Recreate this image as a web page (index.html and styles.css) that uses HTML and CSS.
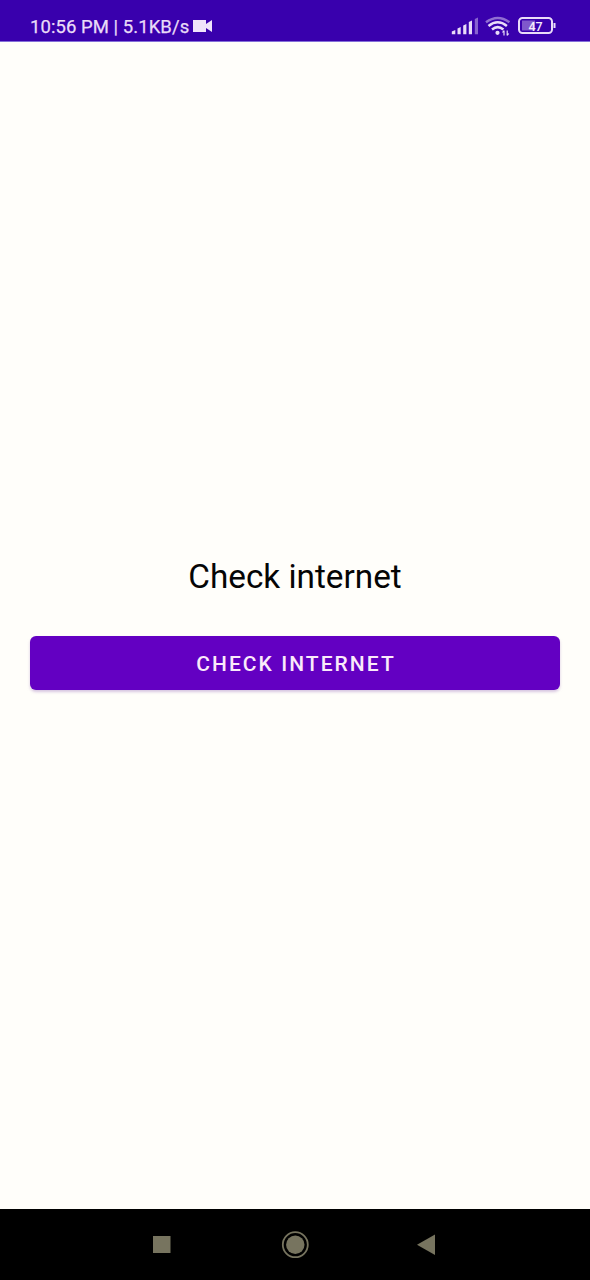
FILE: index.html
```html
<!DOCTYPE html>
<html lang="en">
<head>
<meta charset="utf-8">
<title>Check internet</title>
<link rel="stylesheet" href="styles.css">
</head>
<body>
<div class="screen">
  <header class="status">
    <span class="status-text">10:56 PM | 5.1KB/s</span>
    <svg class="camera" viewBox="0 0 21 14"><path d="M1 1h13v4l6-4v12l-6-4v4H1z"/></svg>
    <svg class="indicators" viewBox="0 0 108 22">
      <g fill="#e9dcf8">
        <path d="M.8 15.500L4.300 14v4.300H.8zM6.500 12.500L9.700 11v7.300H6.500zM12.200 9.500L15.400 8v10.300h-3.200zM17.800 6L21 4.500v13.800h-3.200z"/>
        <path d="M23.800 3L27 1.500v16.800h-3.200z" opacity=".45"/>
      </g>
      <g fill="none" stroke="#e9dcf8" stroke-width="2.500">
        <path d="M35 6.300q11.700-8.500 23.400 0" opacity=".5"/>
        <path d="M37.500 10q9.200-7.500 18.400 0M41 13.500q5.700-4.800 11.400 0"/>
        <circle cx="46.500" cy="16.800" r="1.100" stroke-width="2"/>
        <path d="M53 14.500v5M56.200 14.500v5M51.500 16.500l1.500-2M57.700 17.500l-1.500 2" stroke-width="1.200"/>
        <rect x="68" y="2" width="33" height="15" rx="3.500" stroke-width="2"/>
        <path d="M103.500 7v5" stroke-width="2"/>
      </g>
      <path d="M71 4.500h13v10H71z" fill="#e9dcf8" opacity=".4"/>
      <text x="84.500" y="14.500" class="battery-level">47</text>
    </svg>
  </header>
  <main class="content">
    <h1 class="title">Check internet</h1>
    <button class="button" type="button">CHECK INTERNET</button>
  </main>
  <nav class="navbar">
    <svg class="nav-icon" viewBox="0 0 28 28"><path d="M5 5h17.500v17H5z"/></svg>
    <svg class="nav-icon" viewBox="0 0 28 28"><circle cx="14.300" cy="13.700" r="9.200"/><circle class="ring" cx="14.300" cy="13.700" r="12.500"/></svg>
    <svg class="nav-icon" viewBox="0 0 28 28"><path d="M3 13.700L21 3.500v20.500z"/></svg>
  </nav>
</div>
</body>
</html>
```
FILE: styles.css
```css
* { box-sizing: border-box; }
body { margin: 0; font-family: Roboto, sans-serif; }
.screen {
  width: 590px;
  height: 1280px;
  display: flex;
  flex-direction: column;
  background: #fffefa;
}
.status {
  height: 42px;
  padding: 12px 30px 0;
  display: flex;
  align-items: flex-start;
  background: #3900ad;
  border-bottom: 1px solid #8470d8;
  color: #e9dcf8;
}
.status-text {
  width: 162px;
  font-size: 18.500px;
  font-weight: 400;
  line-height: 30px;
  letter-spacing: .06px;
  white-space: nowrap;
  -webkit-text-stroke: .25px #e9dcf8;
}
.camera { width: 21px; height: 14px; margin-top: 7px; fill: #f0e4fb; }
.indicators { width: 108px; height: 22px; margin: 4px 1px 0 auto; overflow: visible; }
.battery-level { font-size: 12.500px; font-weight: 500; fill: #f4eafc; text-anchor: middle; }
.content { flex: 1; padding: 510px 30px 0; }
.title {
  margin: 0;
  text-align: center;
  font-size: 33.300px;
  font-weight: 400;
  line-height: 50px;
  color: #050505;
}
.button {
  display: block;
  width: 100%;
  height: 54px;
  margin-top: 34px;
  padding: 0 0 0 2px;
  border: 0;
  border-radius: 6px;
  background: #6300c2;
  box-shadow: 0 2px 3px #bda0cf99;
  color: #fbeafa;
  font: 500 21px/56px Roboto, sans-serif;
  letter-spacing: 2.050px;
}
.navbar {
  height: 71px;
  padding: 0 148px;
  display: flex;
  align-items: center;
  justify-content: space-between;
  background: #000;
}
.nav-icon { width: 28px; height: 28px; fill: #77745f; }
.ring { fill: none; stroke: #77745f; stroke-width: 1.800; }
```
